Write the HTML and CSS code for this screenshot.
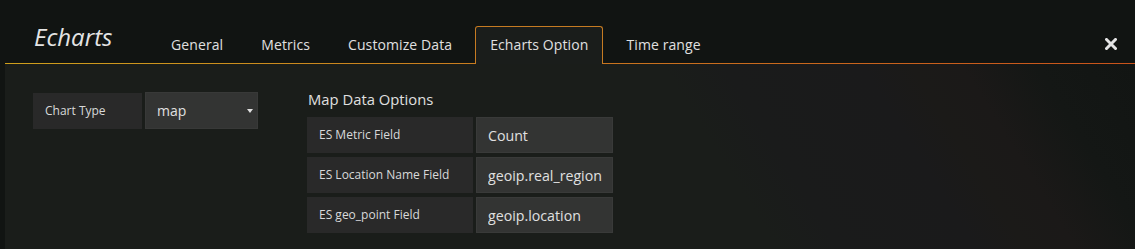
FILE: index.html
```html
<!DOCTYPE html>
<html lang="en">
<head>
    <meta charset="UTF-8">
    <title>Echarts - Edit panel</title>
    <link rel="stylesheet" href="styles.css">
</head>
<body>
    <div class="editor">
        <div class="editor-header">
            <div class="editor-title">Echarts</div>
            <ul class="tabs">
                <li class="tab">General</li>
                <li class="tab">Metrics</li>
                <li class="tab">Customize Data</li>
                <li class="tab active">Echarts Option</li>
                <li class="tab">Time range</li>
            </ul>
            <a class="close" href="#" title="Close">
                <svg width="12" height="12" viewBox="0 0 12 12">
                    <path d="M1.5 1.5 L10.5 10.5 M10.5 1.5 L1.5 10.5" stroke="#e4e4e4" stroke-width="3" stroke-linecap="square"/>
                </svg>
            </a>
        </div>
        <div class="editor-body">
            <div class="form-row">
                <label class="form-label label-chart">Chart Type</label>
                <div class="form-select">
                    <span>map</span>
                    <i class="caret"></i>
                </div>
            </div>
            <div class="options">
                <h5 class="section-heading">Map Data Options</h5>
                <div class="form-row">
                    <label class="form-label">ES Metric Field</label>
                    <input class="form-input" type="text" value="Count">
                </div>
                <div class="form-row">
                    <label class="form-label">ES Location Name Field</label>
                    <input class="form-input" type="text" value="geoip.real_region">
                </div>
                <div class="form-row">
                    <label class="form-label">ES geo_point Field</label>
                    <input class="form-input" type="text" value="geoip.location">
                </div>
            </div>
        </div>
    </div>
</body>
</html>
```

FILE: styles.css
```css
body {
    margin: 0;
    padding: 0;
    background: #111412;
    font-family: "Open Sans", "Liberation Sans", sans-serif;
    color: #d8d9da;
}
.editor {
    margin-left: 5px;
}
.editor-header {
    height: 63px;
    display: flex;
    align-items: flex-end;
    padding-left: 29px;
    background: #111412;
    border-bottom: 1px solid #c8901c;
    border-image: linear-gradient(90deg, #cf9f1c, #c97a1f 45%, #c9531b) 1;
}
.editor-title {
    width: 122px;
    margin-bottom: 11px;
    font-size: 24px;
    line-height: 30px;
    font-style: italic;
    color: #e4e4e4;
}
.tabs {
    display: flex;
    margin: 0 0 -1px 0;
    padding: 0;
    list-style: none;
}
.tab {
    height: 37px;
    line-height: 36px;
    padding: 0 14px;
    margin-right: 8px;
    border: 1px solid transparent;
    border-bottom: none;
    border-radius: 3px 3px 0 0;
    font-size: 14px;
    letter-spacing: 0.1px;
    color: #e0e0e0;
}
.tab.active {
    background: #1a1d1b;
    border-color: #c67b22;
}
.close {
    margin-left: auto;
    margin-right: 18px;
    margin-bottom: 13px;
    line-height: 0;
}
.editor-body {
    display: flex;
    align-items: flex-start;
    gap: 49px;
    height: 185px;
    padding: 29px 0 0 28px;
    box-sizing: border-box;
    background: linear-gradient(58deg, #1a1d1a 0%, #1a1d1a 62%, #1a1b1b 67%, #1a1a1b 78%, #1b1a18 82%, #1b1918 86%, #141715 92%, #121513 100%);
}
.form-row {
    display: flex;
    gap: 3px;
    margin-bottom: 4px;
}
.form-label {
    width: 166px;
    height: 36px;
    line-height: 36px;
    padding-left: 12px;
    box-sizing: border-box;
    background: #292929;
    font-size: 12px;
    color: #d8d9da;
}
.label-chart {
    width: 109px;
}
.form-select {
    width: 113px;
    height: 37px;
    margin-top: -1px;
    display: flex;
    align-items: center;
    justify-content: space-between;
    padding: 0 4px 0 11px;
    box-sizing: border-box;
    background: #333433;
    border: 1px solid #383938;
    font-size: 14px;
    color: #e0e0e0;
}
.caret {
    width: 0;
    height: 0;
    border-left: 3.5px solid transparent;
    border-right: 3.5px solid transparent;
    border-top: 4px solid #e0e0e0;
}
.section-heading {
    margin: -4px 0 8px 1px;
    font-size: 14.8px;
    font-weight: normal;
    line-height: 20px;
    color: #e0e0e0;
}
.form-input {
    width: 137px;
    height: 36px;
    padding: 0 0 0 11px;
    margin: 0;
    box-sizing: border-box;
    background: #333433;
    border: 1px solid #393a39;
    outline: none;
    font-family: "Open Sans", "Liberation Sans", sans-serif;
    font-size: 14.2px;
    color: #e0e0e0;
}
```
